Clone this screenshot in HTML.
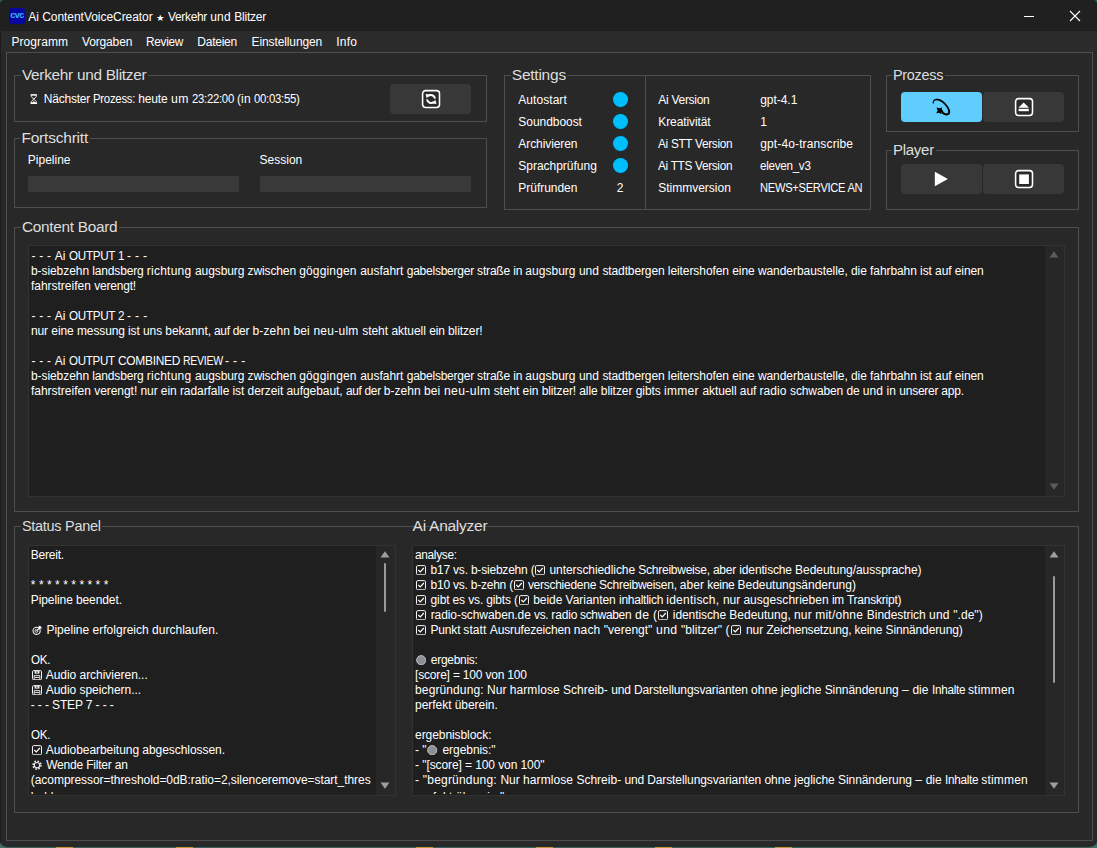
<!DOCTYPE html>
<html><head><meta charset="utf-8"><title>Ai ContentVoiceCreator</title>
<style>
html,body{margin:0;padding:0;overflow:hidden;}
body{width:1097px;height:848px;overflow:hidden;position:relative;background:#4d6f69;font-family:"Liberation Sans",sans-serif;}
#win{position:absolute;left:0;top:0;width:1097px;height:845.5px;background:#282828;border-radius:6px 6px 8px 8px;overflow:hidden;box-shadow:0 0 1.5px 0.5px #14201e;}
.t{position:absolute;white-space:nowrap;font-family:"Liberation Sans",sans-serif;}
.i{display:inline-block;vertical-align:-1.3px;margin-left:0.9px;margin-right:1.4px;}
.dk{position:absolute;top:846.5px;height:1.5px;background:#f0b040;}
</style></head><body>
<div class="dk" style="left:55.5px;width:17px"></div><div class="dk" style="left:175.5px;width:17px"></div><div class="dk" style="left:415.5px;width:17px"></div>
<div class="dk" style="left:536px;width:16.5px"></div><div class="dk" style="left:655px;width:17px"></div><div class="dk" style="left:775.2px;width:17px"></div>
<div id="win">
<div style="position:absolute;left:0px;top:0px;width:1097px;height:31px;background:#202020;"></div>
<div style="position:absolute;left:0px;top:31px;width:1097px;height:21px;background:#2b2b2b;"></div>
<div style="position:absolute;left:0px;top:31px;width:1px;height:814px;background:#1c1c1c;"></div>
<div style="position:absolute;left:9px;top:8px;width:16px;height:16px;border-radius:3px;background:#0707a0;"></div>
<div style="position:absolute;left:8.5px;top:8px;width:17px;height:16px;color:#3fb0ff;font-weight:bold;font-size:9px;line-height:14.5px;text-align:center;letter-spacing:-0.45px;">cvc</div>
<div class="t" id="title_0" style="left:28.3px;top:10px;font-size:12px;line-height:15px;color:#fff;letter-spacing:-0.0385px;white-space:pre;">Ai </div>
<div class="t" id="title_1" style="left:42.2px;top:10px;font-size:12px;line-height:15px;color:#fff;letter-spacing:-0.0467px;white-space:pre;">ContentVoiceCreator </div>
<div class="t" id="title_2" style="left:156.0px;top:10px;font-size:12px;line-height:15px;color:#fff;letter-spacing:0.3500px;white-space:pre;transform:scaleX(1.0600);transform-origin:0 0;"><span style="font-size:9px;position:relative;top:-0.5px">★</span></div>
<div class="t" id="title_3" style="left:168.2px;top:10px;font-size:12px;line-height:15px;color:#fff;letter-spacing:-0.3000px;white-space:pre;transform:scaleX(0.9928);transform-origin:0 0;">Verkehr </div>
<div class="t" id="title_4" style="left:210.2px;top:10px;font-size:12px;line-height:15px;color:#fff;letter-spacing:0.1852px;white-space:pre;">und </div>
<div class="t" id="title_5" style="left:234.3px;top:10px;font-size:12px;line-height:15px;color:#fff;letter-spacing:-0.2491px;white-space:pre;">Blitzer</div>
<div style="position:absolute;left:1024px;top:16px;width:10px;height:1px;background:#fff;"></div>
<svg style="position:absolute;left:1069px;top:10px" width="12" height="12" viewBox="0 0 12 12"><path d="M1 1 L11 11 M11 1 L1 11" stroke="#fff" stroke-width="1.1" fill="none"/></svg>
<div class="t" id="m0" style="left:11.5px;top:35px;font-size:12px;line-height:15px;color:#fff;letter-spacing:0.0605px;">Programm</div>
<div class="t" id="m1" style="left:82.0px;top:35px;font-size:12px;line-height:15px;color:#fff;letter-spacing:-0.1488px;">Vorgaben</div>
<div class="t" id="m2" style="left:146.20000000000002px;top:35px;font-size:12px;line-height:15px;color:#fff;letter-spacing:-0.3000px;transform:scaleX(0.9878);transform-origin:0 0;">Review</div>
<div class="t" id="m3" style="left:197.3px;top:35px;font-size:12px;line-height:15px;color:#fff;letter-spacing:-0.2393px;">Dateien</div>
<div class="t" id="m4" style="left:251.5px;top:35px;font-size:12px;line-height:15px;color:#fff;letter-spacing:-0.1048px;">Einstellungen</div>
<div class="t" id="m5" style="left:336.2px;top:35px;font-size:12px;line-height:15px;color:#fff;letter-spacing:0.2711px;">Info</div>
<div style="position:absolute;left:6px;top:52px;width:1087px;height:789px;box-sizing:border-box;border:1px solid #4e4e4e;"></div>
<div style="position:absolute;left:14px;top:75px;width:473px;height:47px;box-sizing:border-box;border:1px solid #4e4e4e;"></div>
<div style="position:absolute;left:21.3px;top:75px;width:126.8px;height:1px;background:#282828;"></div>
<div class="t" id="g1" style="left:22.3px;top:65px;font-size:15.5px;line-height:20px;color:#dedede;letter-spacing:-0.3000px;transform:scaleX(0.9923);transform-origin:0 0;">Verkehr und Blitzer</div>
<div style="position:absolute;left:30px;top:93.5px;line-height:0;font-size:0"><svg style="display:block" width="7.6" height="10.2" viewBox="0 0 8 11" preserveAspectRatio="none"><path d="M0.5 0.8 H7.5 M0.5 10.2 H7.5" stroke="#fff" stroke-width="1.3"/><path d="M1.4 1.2 V2.8 L4 5.5 L6.6 2.8 V1.2 Z M1.4 9.8 V8.2 L4 5.5 L6.6 8.2 V9.8 Z" fill="none" stroke="#fff" stroke-width="1"/><path d="M2.2 9.6 L4 7.6 L5.8 9.6Z" fill="#fff"/></svg></div>
<div class="t" id="np_0" style="left:43.8px;top:92px;font-size:12px;line-height:15px;color:#fff;letter-spacing:-0.2177px;white-space:pre;">Nächster </div>
<div class="t" id="np_1" style="left:93.2px;top:92px;font-size:12px;line-height:15px;color:#fff;letter-spacing:-0.3000px;white-space:pre;transform:scaleX(0.9511);transform-origin:0 0;">Prozess: </div>
<div class="t" id="np_2" style="left:138.2px;top:92px;font-size:12px;line-height:15px;color:#fff;letter-spacing:-0.1458px;white-space:pre;">heute </div>
<div class="t" id="np_3" style="left:170.7px;top:92px;font-size:12px;line-height:15px;color:#fff;letter-spacing:0.3500px;white-space:pre;transform:scaleX(1.0206);transform-origin:0 0;">um </div>
<div class="t" id="np_4" style="left:192.2px;top:92px;font-size:12px;line-height:15px;color:#fff;letter-spacing:-0.3000px;white-space:pre;transform:scaleX(0.9462);transform-origin:0 0;">23:22:00 </div>
<div class="t" id="np_5" style="left:237.0px;top:92px;font-size:12px;line-height:15px;color:#fff;letter-spacing:0.1070px;white-space:pre;">(in </div>
<div class="t" id="np_6" style="left:254.1px;top:92px;font-size:12px;line-height:15px;color:#fff;letter-spacing:-0.3000px;white-space:pre;transform:scaleX(0.9496);transform-origin:0 0;">00:03:55)</div>
<div style="position:absolute;left:390px;top:84px;width:81px;height:30px;background:#383838;border-radius:4px;"></div>
<svg style="position:absolute;left:421px;top:89px" width="20" height="20" viewBox="0 0 20 20"><rect x="1.6" y="1.6" width="16.9" height="16.9" rx="2.9" fill="#2b2b2b" stroke="#fff" stroke-width="1.55"/><path d="M7.1 7.2 A4.1 4.1 0 0 1 14.0 9.6" fill="none" stroke="#fff" stroke-width="2"/><path d="M4.6 4.9 L9.0 5.6 L5.6 9.3 Z" fill="#fff"/><path d="M12.9 12.8 A4.1 4.1 0 0 1 6.0 10.4" fill="none" stroke="#fff" stroke-width="2"/><path d="M15.4 15.1 L11.0 14.4 L14.4 10.7 Z" fill="#fff"/></svg>
<div style="position:absolute;left:14px;top:138px;width:473px;height:70px;box-sizing:border-box;border:1px solid #4e4e4e;"></div>
<div style="position:absolute;left:20.4px;top:138px;width:69.2px;height:1px;background:#282828;"></div>
<div class="t" id="g2" style="left:21.4px;top:128px;font-size:15.5px;line-height:20px;color:#dedede;letter-spacing:-0.2006px;">Fortschritt</div>
<div class="t" id="pl" style="left:27.8px;top:153px;font-size:12px;line-height:15px;color:#fff;letter-spacing:0.0000px;">Pipeline</div>
<div class="t" id="se" style="left:259.6px;top:153px;font-size:12px;line-height:15px;color:#fff;letter-spacing:0.0000px;">Session</div>
<div style="position:absolute;left:28px;top:176px;width:211px;height:16px;background:#3a3a3a;border-radius:2px;"></div>
<div style="position:absolute;left:260px;top:176px;width:211px;height:16px;background:#3a3a3a;border-radius:2px;"></div>
<div style="position:absolute;left:504px;top:75px;width:367px;height:135px;box-sizing:border-box;border:1px solid #4e4e4e;"></div>
<div style="position:absolute;left:510.8px;top:75px;width:56.6px;height:1px;background:#282828;"></div>
<div class="t" id="g3" style="left:511.8px;top:65px;font-size:15.5px;line-height:20px;color:#dedede;letter-spacing:-0.2395px;">Settings</div>
<div style="position:absolute;left:645px;top:75px;width:1px;height:135px;background:#4e4e4e;"></div>
<div class="t" id="sa0" style="left:518.3px;top:93px;font-size:12px;line-height:15px;color:#fff;letter-spacing:0.0521px;">Autostart</div>
<div class="t" id="sb0" style="left:658.3px;top:93px;font-size:12px;line-height:15px;color:#fff;letter-spacing:-0.2831px;">Ai Version</div>
<div class="t" id="sc0" style="left:760.2px;top:93px;font-size:12px;line-height:15px;color:#fff;letter-spacing:-0.0371px;">gpt-4.1</div>
<div style="position:absolute;left:613.0px;top:91.9px;width:15.2px;height:15.2px;border-radius:50%;background:#00bfff;box-shadow:0 0 0 0.7px #123540;"></div>
<div class="t" id="sa1" style="left:518.3px;top:115px;font-size:12px;line-height:15px;color:#fff;letter-spacing:-0.0462px;">Soundboost</div>
<div class="t" id="sb1" style="left:658.3px;top:115px;font-size:12px;line-height:15px;color:#fff;letter-spacing:-0.0963px;">Kreativität</div>
<div class="t" id="sc1" style="left:760.2px;top:115px;font-size:12px;line-height:15px;color:#fff;letter-spacing:0.0000px;">1</div>
<div style="position:absolute;left:613.0px;top:113.9px;width:15.2px;height:15.2px;border-radius:50%;background:#00bfff;box-shadow:0 0 0 0.7px #123540;"></div>
<div class="t" id="sa2" style="left:518.3px;top:137px;font-size:12px;line-height:15px;color:#fff;letter-spacing:-0.0847px;">Archivieren</div>
<div class="t" id="sb2" style="left:658.3px;top:137px;font-size:12px;line-height:15px;color:#fff;letter-spacing:-0.3000px;transform:scaleX(0.9826);transform-origin:0 0;">Ai STT Version</div>
<div class="t" id="sc2" style="left:760.2px;top:137px;font-size:12px;line-height:15px;color:#fff;letter-spacing:0.1342px;">gpt-4o-transcribe</div>
<div style="position:absolute;left:613.0px;top:135.9px;width:15.2px;height:15.2px;border-radius:50%;background:#00bfff;box-shadow:0 0 0 0.7px #123540;"></div>
<div class="t" id="sa3" style="left:518.3px;top:159px;font-size:12px;line-height:15px;color:#fff;letter-spacing:-0.0180px;">Sprachprüfung</div>
<div class="t" id="sb3" style="left:658.3px;top:159px;font-size:12px;line-height:15px;color:#fff;letter-spacing:-0.3000px;transform:scaleX(0.9813);transform-origin:0 0;">Ai TTS Version</div>
<div class="t" id="sc3" style="left:760.2px;top:159px;font-size:12px;line-height:15px;color:#fff;letter-spacing:-0.3000px;transform:scaleX(0.9727);transform-origin:0 0;">eleven_v3</div>
<div style="position:absolute;left:613.0px;top:157.9px;width:15.2px;height:15.2px;border-radius:50%;background:#00bfff;box-shadow:0 0 0 0.7px #123540;"></div>
<div class="t" id="sa4" style="left:518.3px;top:181px;font-size:12px;line-height:15px;color:#fff;letter-spacing:-0.0275px;">Prüfrunden</div>
<div class="t" id="sb4" style="left:658.3px;top:181px;font-size:12px;line-height:15px;color:#fff;letter-spacing:-0.0156px;">Stimmversion</div>
<div class="t" id="sc4" style="left:760.2px;top:181px;font-size:12px;line-height:15px;color:#fff;letter-spacing:-0.3000px;transform:scaleX(0.9281);transform-origin:0 0;">NEWS+SERVICE AN</div>
<div class="t" id="two" style="left:616.8px;top:181px;font-size:12px;line-height:15px;color:#fff;letter-spacing:0.0000px;">2</div>
<div style="position:absolute;left:886px;top:75px;width:193px;height:57px;box-sizing:border-box;border:1px solid #4e4e4e;"></div>
<div style="position:absolute;left:892.3px;top:75px;width:52.6px;height:1px;background:#282828;"></div>
<div class="t" id="g4" style="left:893.3px;top:65px;font-size:15.5px;line-height:20px;color:#dedede;letter-spacing:-0.3000px;transform:scaleX(0.9295);transform-origin:0 0;">Prozess</div>
<div style="position:absolute;left:901px;top:92px;width:81px;height:30px;background:#60cdff;border-radius:4px;"></div>
<div style="position:absolute;left:983px;top:92px;width:81px;height:30px;background:#383838;border-radius:4px;"></div>
<svg style="position:absolute;left:931px;top:96px" width="22" height="22" viewBox="0 0 22 22"><path d="M1.8 7.5 C0.8 3.0 6.4 0.9 11.6 4.7 C16.8 8.5 21.0 15.4 18.5 18.3 C16.6 20.4 12.8 19.4 10.4 17.0 L11.6 15.6 C13.4 17.3 15.8 18.0 16.9 16.8 C18.4 15.0 15.2 9.6 10.8 6.3 C6.2 2.9 2.1 3.7 2.9 7.4 Z" fill="#000"/><path d="M5.4 11.4 L9.0 12.3 L10.8 11.2 L11.0 13.8 L12.6 15.4 L10.6 16.2 L10.2 18.3 L8.2 16.8 L5.2 17.2 L6.7 14.6 Z" fill="#000"/></svg>
<svg style="position:absolute;left:1014px;top:97px" width="20" height="20" viewBox="0 0 20 20"><rect x="1.6" y="1.6" width="16.9" height="16.9" rx="2.9" fill="#2b2b2b" stroke="#fff" stroke-width="1.55"/><path d="M9.7 5.6 L15 10.8 H4.4 Z" fill="#fff"/><rect x="4.6" y="11.8" width="10.2" height="2.4" fill="#fff"/></svg>
<div style="position:absolute;left:886px;top:150px;width:193px;height:60px;box-sizing:border-box;border:1px solid #4e4e4e;"></div>
<div style="position:absolute;left:892.4px;top:150px;width:43.4px;height:1px;background:#282828;"></div>
<div class="t" id="g5" style="left:893.4px;top:140px;font-size:15.5px;line-height:20px;color:#dedede;letter-spacing:-0.3000px;transform:scaleX(0.9706);transform-origin:0 0;">Player</div>
<div style="position:absolute;left:901px;top:164px;width:81px;height:30px;background:#383838;border-radius:4px;"></div>
<div style="position:absolute;left:983px;top:164px;width:81px;height:30px;background:#383838;border-radius:4px;"></div>
<svg style="position:absolute;left:934px;top:171px" width="15" height="16" viewBox="0 0 15 16"><path d="M0.8 0.8 L13.9 8 L0.8 15.2 Z" fill="#fff"/></svg>
<svg style="position:absolute;left:1014px;top:169px" width="20" height="20" viewBox="0 0 20 20"><rect x="1.6" y="1.6" width="16.9" height="16.9" rx="2.9" fill="#2b2b2b" stroke="#fff" stroke-width="1.55"/><rect x="5.2" y="5.4" width="9.7" height="9.6" fill="#fff"/></svg>
<div style="position:absolute;left:14px;top:227px;width:1065px;height:285px;box-sizing:border-box;border:1px solid #4e4e4e;"></div>
<div style="position:absolute;left:21.1px;top:227px;width:97.8px;height:1px;background:#282828;"></div>
<div class="t" id="g6" style="left:22.1px;top:217px;font-size:15.5px;line-height:20px;color:#dedede;letter-spacing:-0.3000px;transform:scaleX(0.9920);transform-origin:0 0;">Content Board</div>
<div style="position:absolute;left:28px;top:245px;width:1037px;height:252px;background:#1f1f1f;box-sizing:border-box;border:1px solid #323232;"></div>
<div style="position:absolute;left:1045px;top:246px;width:19px;height:250px;background:#272727;"></div>
<svg style="position:absolute;left:1049px;top:250.5px" width="10" height="7" viewBox="0 0 10 7"><path d="M5 0.3 L9.5 6.5 H0.5 Z" fill="#5c5c5c"/></svg>
<svg style="position:absolute;left:1049px;top:483px" width="10" height="7" viewBox="0 0 10 7"><path d="M5 6.7 L9.5 0.5 H0.5 Z" fill="#5c5c5c"/></svg>
<div class="t" id="cb0_0" style="left:31.4px;top:249px;font-size:12px;line-height:15px;color:#fff;letter-spacing:0.2333px;white-space:pre;">- - - </div>
<div class="t" id="cb0_1" style="left:54.8px;top:249px;font-size:12px;line-height:15px;color:#fff;letter-spacing:0.0615px;white-space:pre;">Ai </div>
<div class="t" id="cb0_2" style="left:69.0px;top:249px;font-size:12px;line-height:15px;color:#fff;letter-spacing:-0.3000px;white-space:pre;transform:scaleX(0.9711);transform-origin:0 0;">OUTPUT </div>
<div class="t" id="cb0_3" style="left:117.9px;top:249px;font-size:12px;line-height:15px;color:#fff;letter-spacing:-0.3000px;white-space:pre;transform:scaleX(0.9665);transform-origin:0 0;">1 </div>
<div class="t" id="cb0_4" style="left:127.0px;top:249px;font-size:12px;line-height:15px;color:#fff;letter-spacing:0.3488px;white-space:pre;">- - -</div>
<div class="t" id="cb1_0" style="left:30.9px;top:264px;font-size:12px;line-height:15px;color:#fff;letter-spacing:-0.0588px;white-space:pre;">b-siebzehn </div>
<div class="t" id="cb1_1" style="left:92.3px;top:264px;font-size:12px;line-height:15px;color:#fff;letter-spacing:-0.1547px;white-space:pre;">landsberg </div>
<div class="t" id="cb1_2" style="left:146.8px;top:264px;font-size:12px;line-height:15px;color:#fff;letter-spacing:0.2410px;white-space:pre;">richtung </div>
<div class="t" id="cb1_3" style="left:195.0px;top:264px;font-size:12px;line-height:15px;color:#fff;letter-spacing:-0.0861px;white-space:pre;">augsburg </div>
<div class="t" id="cb1_4" style="left:247.6px;top:264px;font-size:12px;line-height:15px;color:#fff;letter-spacing:-0.1208px;white-space:pre;">zwischen </div>
<div class="t" id="cb1_5" style="left:299.2px;top:264px;font-size:12px;line-height:15px;color:#fff;letter-spacing:0.1609px;white-space:pre;">göggingen </div>
<div class="t" id="cb1_6" style="left:360.2px;top:264px;font-size:12px;line-height:15px;color:#fff;letter-spacing:-0.0226px;white-space:pre;">ausfahrt </div>
<div class="t" id="cb1_7" style="left:406.7px;top:264px;font-size:12px;line-height:15px;color:#fff;letter-spacing:-0.2300px;white-space:pre;">gabelsberger </div>
<div class="t" id="cb1_8" style="left:477.1px;top:264px;font-size:12px;line-height:15px;color:#fff;letter-spacing:-0.1816px;white-space:pre;">straße in </div>
<div class="t" id="cb1_9" style="left:525.3px;top:264px;font-size:12px;line-height:15px;color:#fff;letter-spacing:0.0281px;white-space:pre;">augsburg und </div>
<div class="t" id="cb1_10" style="left:602.4px;top:264px;font-size:12px;line-height:15px;color:#fff;letter-spacing:-0.1099px;white-space:pre;">stadtbergen </div>
<div class="t" id="cb1_11" style="left:667.8px;top:264px;font-size:12px;line-height:15px;color:#fff;letter-spacing:-0.0726px;white-space:pre;">leitershofen eine </div>
<div class="t" id="cb1_12" style="left:757.9px;top:264px;font-size:12px;line-height:15px;color:#fff;letter-spacing:-0.0582px;white-space:pre;">wanderbaustelle, die </div>
<div class="t" id="cb1_13" style="left:870.1px;top:264px;font-size:12px;line-height:15px;color:#fff;letter-spacing:-0.0828px;white-space:pre;">fahrbahn ist auf einen</div>
<div class="t" id="cb2_0" style="left:30.9px;top:279px;font-size:12px;line-height:15px;color:#fff;letter-spacing:-0.0058px;white-space:pre;">fahrstreifen </div>
<div class="t" id="cb2_1" style="left:94.2px;top:279px;font-size:12px;line-height:15px;color:#fff;letter-spacing:-0.1949px;white-space:pre;">verengt!</div>
<div class="t" id="cb4_0" style="left:31.4px;top:309px;font-size:12px;line-height:15px;color:#fff;letter-spacing:0.2333px;white-space:pre;">- - - </div>
<div class="t" id="cb4_1" style="left:54.8px;top:309px;font-size:12px;line-height:15px;color:#fff;letter-spacing:0.0615px;white-space:pre;">Ai </div>
<div class="t" id="cb4_2" style="left:69.0px;top:309px;font-size:12px;line-height:15px;color:#fff;letter-spacing:-0.3000px;white-space:pre;transform:scaleX(0.9711);transform-origin:0 0;">OUTPUT </div>
<div class="t" id="cb4_3" style="left:117.9px;top:309px;font-size:12px;line-height:15px;color:#fff;letter-spacing:-0.3000px;white-space:pre;transform:scaleX(0.9665);transform-origin:0 0;">2 </div>
<div class="t" id="cb4_4" style="left:127.0px;top:309px;font-size:12px;line-height:15px;color:#fff;letter-spacing:0.3500px;white-space:pre;transform:scaleX(1.0095);transform-origin:0 0;">- - -</div>
<div class="t" id="cb5_0" style="left:30.9px;top:324px;font-size:12px;line-height:15px;color:#fff;letter-spacing:-0.0670px;white-space:pre;">nur eine </div>
<div class="t" id="cb5_1" style="left:77.0px;top:324px;font-size:12px;line-height:15px;color:#fff;letter-spacing:-0.1216px;white-space:pre;">messung ist </div>
<div class="t" id="cb5_2" style="left:142.9px;top:324px;font-size:12px;line-height:15px;color:#fff;letter-spacing:-0.0510px;white-space:pre;">uns bekannt, </div>
<div class="t" id="cb5_3" style="left:214.3px;top:324px;font-size:12px;line-height:15px;color:#fff;letter-spacing:-0.3000px;white-space:pre;transform:scaleX(0.9973);transform-origin:0 0;">auf der </div>
<div class="t" id="cb5_4" style="left:252.5px;top:324px;font-size:12px;line-height:15px;color:#fff;letter-spacing:0.1386px;white-space:pre;">b-zehn bei </div>
<div class="t" id="cb5_5" style="left:313.4px;top:324px;font-size:12px;line-height:15px;color:#fff;letter-spacing:0.2641px;white-space:pre;">neu-ulm </div>
<div class="t" id="cb5_6" style="left:362.2px;top:324px;font-size:12px;line-height:15px;color:#fff;letter-spacing:-0.0268px;white-space:pre;">steht aktuell </div>
<div class="t" id="cb5_7" style="left:429.2px;top:324px;font-size:12px;line-height:15px;color:#fff;letter-spacing:-0.1169px;white-space:pre;">ein blitzer!</div>
<div class="t" id="cb7_0" style="left:31.4px;top:354px;font-size:12px;line-height:15px;color:#fff;letter-spacing:0.2333px;white-space:pre;">- - - </div>
<div class="t" id="cb7_1" style="left:54.8px;top:354px;font-size:12px;line-height:15px;color:#fff;letter-spacing:0.0615px;white-space:pre;">Ai </div>
<div class="t" id="cb7_2" style="left:69.0px;top:354px;font-size:12px;line-height:15px;color:#fff;letter-spacing:-0.3000px;white-space:pre;transform:scaleX(0.9652);transform-origin:0 0;">OUTPUT </div>
<div class="t" id="cb7_3" style="left:117.6px;top:354px;font-size:12px;line-height:15px;color:#fff;letter-spacing:-0.3000px;white-space:pre;transform:scaleX(0.9952);transform-origin:0 0;">COMBINED </div>
<div class="t" id="cb7_4" style="left:182.6px;top:354px;font-size:12px;line-height:15px;color:#fff;letter-spacing:-0.3000px;white-space:pre;transform:scaleX(0.8771);transform-origin:0 0;">REVIEW </div>
<div class="t" id="cb7_5" style="left:225.2px;top:354px;font-size:12px;line-height:15px;color:#fff;letter-spacing:0.3500px;white-space:pre;transform:scaleX(1.0095);transform-origin:0 0;">- - -</div>
<div class="t" id="cb8_0" style="left:30.9px;top:369px;font-size:12px;line-height:15px;color:#fff;letter-spacing:-0.0588px;white-space:pre;">b-siebzehn </div>
<div class="t" id="cb8_1" style="left:92.3px;top:369px;font-size:12px;line-height:15px;color:#fff;letter-spacing:-0.1547px;white-space:pre;">landsberg </div>
<div class="t" id="cb8_2" style="left:146.8px;top:369px;font-size:12px;line-height:15px;color:#fff;letter-spacing:0.2410px;white-space:pre;">richtung </div>
<div class="t" id="cb8_3" style="left:195.0px;top:369px;font-size:12px;line-height:15px;color:#fff;letter-spacing:-0.0861px;white-space:pre;">augsburg </div>
<div class="t" id="cb8_4" style="left:247.6px;top:369px;font-size:12px;line-height:15px;color:#fff;letter-spacing:-0.1208px;white-space:pre;">zwischen </div>
<div class="t" id="cb8_5" style="left:299.2px;top:369px;font-size:12px;line-height:15px;color:#fff;letter-spacing:0.1609px;white-space:pre;">göggingen </div>
<div class="t" id="cb8_6" style="left:360.2px;top:369px;font-size:12px;line-height:15px;color:#fff;letter-spacing:-0.0226px;white-space:pre;">ausfahrt </div>
<div class="t" id="cb8_7" style="left:406.7px;top:369px;font-size:12px;line-height:15px;color:#fff;letter-spacing:-0.2300px;white-space:pre;">gabelsberger </div>
<div class="t" id="cb8_8" style="left:477.1px;top:369px;font-size:12px;line-height:15px;color:#fff;letter-spacing:-0.1816px;white-space:pre;">straße in </div>
<div class="t" id="cb8_9" style="left:525.3px;top:369px;font-size:12px;line-height:15px;color:#fff;letter-spacing:0.0281px;white-space:pre;">augsburg und </div>
<div class="t" id="cb8_10" style="left:602.4px;top:369px;font-size:12px;line-height:15px;color:#fff;letter-spacing:-0.1099px;white-space:pre;">stadtbergen </div>
<div class="t" id="cb8_11" style="left:667.8px;top:369px;font-size:12px;line-height:15px;color:#fff;letter-spacing:-0.0726px;white-space:pre;">leitershofen eine </div>
<div class="t" id="cb8_12" style="left:757.9px;top:369px;font-size:12px;line-height:15px;color:#fff;letter-spacing:-0.0582px;white-space:pre;">wanderbaustelle, die </div>
<div class="t" id="cb8_13" style="left:870.1px;top:369px;font-size:12px;line-height:15px;color:#fff;letter-spacing:-0.0828px;white-space:pre;">fahrbahn ist auf einen</div>
<div class="t" id="cb9_0" style="left:30.9px;top:384px;font-size:12px;line-height:15px;color:#fff;letter-spacing:-0.0058px;white-space:pre;">fahrstreifen </div>
<div class="t" id="cb9_1" style="left:94.2px;top:384px;font-size:12px;line-height:15px;color:#fff;letter-spacing:-0.0448px;white-space:pre;">verengt! </div>
<div class="t" id="cb9_2" style="left:140.5px;top:384px;font-size:12px;line-height:15px;color:#fff;letter-spacing:-0.0789px;white-space:pre;">nur ein </div>
<div class="t" id="cb9_3" style="left:179.9px;top:384px;font-size:12px;line-height:15px;color:#fff;letter-spacing:-0.0669px;white-space:pre;">radarfalle ist </div>
<div class="t" id="cb9_4" style="left:247.6px;top:384px;font-size:12px;line-height:15px;color:#fff;letter-spacing:-0.0582px;white-space:pre;">derzeit aufgebaut, </div>
<div class="t" id="cb9_5" style="left:345.9px;top:384px;font-size:12px;line-height:15px;color:#fff;letter-spacing:-0.3000px;white-space:pre;transform:scaleX(0.9869);transform-origin:0 0;">auf der </div>
<div class="t" id="cb9_6" style="left:383.7px;top:384px;font-size:12px;line-height:15px;color:#fff;letter-spacing:0.0386px;white-space:pre;">b-zehn bei </div>
<div class="t" id="cb9_7" style="left:443.5px;top:384px;font-size:12px;line-height:15px;color:#fff;letter-spacing:0.3500px;white-space:pre;transform:scaleX(1.0144);transform-origin:0 0;">neu-ulm </div>
<div class="t" id="cb9_8" style="left:493.7px;top:384px;font-size:12px;line-height:15px;color:#fff;letter-spacing:-0.0703px;white-space:pre;">steht ein </div>
<div class="t" id="cb9_9" style="left:541.7px;top:384px;font-size:12px;line-height:15px;color:#fff;letter-spacing:-0.1208px;white-space:pre;">blitzer! </div>
<div class="t" id="cb9_10" style="left:579.3px;top:384px;font-size:12px;line-height:15px;color:#fff;letter-spacing:-0.1031px;white-space:pre;">alle </div>
<div class="t" id="cb9_11" style="left:600.8px;top:384px;font-size:12px;line-height:15px;color:#fff;letter-spacing:-0.0594px;white-space:pre;">blitzer gibts </div>
<div class="t" id="cb9_12" style="left:664.0px;top:384px;font-size:12px;line-height:15px;color:#fff;letter-spacing:0.2880px;white-space:pre;">immer </div>
<div class="t" id="cb9_13" style="left:702.4px;top:384px;font-size:12px;line-height:15px;color:#fff;letter-spacing:-0.0789px;white-space:pre;">aktuell auf </div>
<div class="t" id="cb9_14" style="left:759.5px;top:384px;font-size:12px;line-height:15px;color:#fff;letter-spacing:0.0781px;white-space:pre;">radio </div>
<div class="t" id="cb9_15" style="left:790.0px;top:384px;font-size:12px;line-height:15px;color:#fff;letter-spacing:-0.1052px;white-space:pre;">schwaben de </div>
<div class="t" id="cb9_16" style="left:862.8px;top:384px;font-size:12px;line-height:15px;color:#fff;letter-spacing:0.0670px;white-space:pre;">und in </div>
<div class="t" id="cb9_17" style="left:899.3px;top:384px;font-size:12px;line-height:15px;color:#fff;letter-spacing:-0.2539px;white-space:pre;">unserer </div>
<div class="t" id="cb9_18" style="left:941.3px;top:384px;font-size:12px;line-height:15px;color:#fff;letter-spacing:-0.1648px;white-space:pre;">app.</div>
<div style="position:absolute;left:14px;top:526px;width:1065px;height:287px;box-sizing:border-box;border:1px solid #4e4e4e;"></div>
<div style="position:absolute;left:20.9px;top:526px;width:81.1px;height:1px;background:#282828;"></div>
<div class="t" id="g7" style="left:21.9px;top:516px;font-size:15.5px;line-height:20px;color:#dedede;letter-spacing:-0.3000px;transform:scaleX(0.9323);transform-origin:0 0;">Status Panel</div>
<div class="t" id="g8" style="left:412.6px;top:516px;font-size:15.5px;line-height:20px;color:#dedede;letter-spacing:-0.2588px;">Ai Analyzer</div>
<div style="position:absolute;left:28px;top:545px;width:368px;height:251px;background:#1f1f1f;box-sizing:border-box;border:1px solid #323232;"></div>
<div style="position:absolute;left:376px;top:546px;width:19px;height:249px;background:#272727;"></div>
<svg style="position:absolute;left:380px;top:550.5px" width="10" height="7" viewBox="0 0 10 7"><path d="M5 0.3 L9.5 6.5 H0.5 Z" fill="#9e9e9e"/></svg>
<svg style="position:absolute;left:380px;top:782px" width="10" height="7" viewBox="0 0 10 7"><path d="M5 6.7 L9.5 0.5 H0.5 Z" fill="#9e9e9e"/></svg>
<div style="position:absolute;left:383.7px;top:562.7px;width:2.6px;height:49.299999999999955px;background:#9a9a9a;border-radius:1.3px;"></div>
<div style="position:absolute;left:412px;top:545px;width:653px;height:251px;background:#1f1f1f;box-sizing:border-box;border:1px solid #323232;"></div>
<div style="position:absolute;left:1045px;top:546px;width:19px;height:249px;background:#272727;"></div>
<svg style="position:absolute;left:1049px;top:550.5px" width="10" height="7" viewBox="0 0 10 7"><path d="M5 0.3 L9.5 6.5 H0.5 Z" fill="#9e9e9e"/></svg>
<svg style="position:absolute;left:1049px;top:782px" width="10" height="7" viewBox="0 0 10 7"><path d="M5 6.7 L9.5 0.5 H0.5 Z" fill="#9e9e9e"/></svg>
<div style="position:absolute;left:1052.7px;top:576px;width:2.6px;height:106.5px;background:#9a9a9a;border-radius:1.3px;"></div>
<div style="position:absolute;left:0;top:0;width:1097px;height:794px;overflow:hidden;">
<div class="t" id="sp0" style="left:30.8px;top:548px;font-size:12px;line-height:15px;color:#fff;letter-spacing:-0.2268px;">Bereit.</div>
<div class="t" id="sp2" style="left:30.8px;top:578px;font-size:12px;line-height:15px;color:#fff;letter-spacing:0.0464px;">* * * * * * * * * *</div>
<div class="t" id="sp3" style="left:30.8px;top:593px;font-size:12px;line-height:15px;color:#fff;letter-spacing:-0.0971px;">Pipeline beendet.</div>
<div class="t" id="sp5" style="left:30.8px;top:623px;font-size:12px;line-height:15px;color:#fff;letter-spacing:0.0125px;"><svg class="i" width="10" height="10.4" viewBox="0 0 10 10.4"><circle cx="4.6" cy="5.8" r="3.6" fill="none" stroke="#f0f0f0" stroke-width="1.05"/><path d="M6 5.8 A1.5 1.5 0 1 1 4.6 4.3" fill="none" stroke="#f0f0f0" stroke-width="0.9"/><path d="M4.6 5.8 L8.6 1.8" stroke="#fff" stroke-width="1.1" fill="none"/><path d="M6.6 0.6 L7.2 3.2 L9.8 3.8 L9 1.4 Z" fill="#fff"/></svg> Pipeline erfolgreich durchlaufen.</div>
<div class="t" id="sp7" style="left:30.8px;top:653px;font-size:12px;line-height:15px;color:#fff;letter-spacing:-0.3000px;transform:scaleX(0.9660);transform-origin:0 0;">OK.</div>
<div class="t" id="sp8" style="left:30.8px;top:668px;font-size:12px;line-height:15px;color:#fff;letter-spacing:-0.0358px;"><svg class="i" width="10" height="10.4" viewBox="0 0 10 10.4"><rect x="0.5" y="0.6" width="9" height="9.2" rx="1.2" fill="none" stroke="#f4f4f4" stroke-width="1"/><rect x="2.6" y="1" width="4.8" height="2.6" fill="#f0f0f0"/><rect x="4.3" y="1.5" width="1.3" height="1.3" fill="#202020"/><path d="M2.2 9.6 V5.6 H7.8 V9.6 M2.6 7.5 H7.4" fill="none" stroke="#f0f0f0" stroke-width="0.9"/></svg> Audio archivieren...</div>
<div class="t" id="sp9" style="left:30.8px;top:683px;font-size:12px;line-height:15px;color:#fff;letter-spacing:-0.0408px;"><svg class="i" width="10" height="10.4" viewBox="0 0 10 10.4"><rect x="0.5" y="0.6" width="9" height="9.2" rx="1.2" fill="none" stroke="#f4f4f4" stroke-width="1"/><rect x="2.6" y="1" width="4.8" height="2.6" fill="#f0f0f0"/><rect x="4.3" y="1.5" width="1.3" height="1.3" fill="#202020"/><path d="M2.2 9.6 V5.6 H7.8 V9.6 M2.6 7.5 H7.4" fill="none" stroke="#f0f0f0" stroke-width="0.9"/></svg> Audio speichern...</div>
<div class="t" id="sp10" style="left:30.8px;top:698px;font-size:12px;line-height:15px;color:#fff;letter-spacing:-0.1292px;">- - - STEP 7 - - -</div>
<div class="t" id="sp12" style="left:30.8px;top:728px;font-size:12px;line-height:15px;color:#fff;letter-spacing:-0.3000px;transform:scaleX(0.9660);transform-origin:0 0;">OK.</div>
<div class="t" id="sp13" style="left:30.8px;top:743px;font-size:12px;line-height:15px;color:#fff;letter-spacing:-0.0474px;"><svg class="i" width="10" height="10.4" viewBox="0 0 10 10.4"><rect x="0.5" y="0.6" width="9" height="9.2" rx="1.3" fill="none" stroke="#f4f4f4" stroke-width="1"/><path d="M2.3 5.0 L4.3 7.0 L7.8 3.0" fill="none" stroke="#fff" stroke-width="1.15"/></svg> Audiobearbeitung abgeschlossen.</div>
<div class="t" id="sp14" style="left:30.8px;top:758px;font-size:12px;line-height:15px;color:#fff;letter-spacing:-0.2006px;"><svg class="i" width="10" height="10.4" viewBox="0 0 10 10.4"><circle cx="5" cy="5.2" r="3.9" fill="none" stroke="#f0f0f0" stroke-width="1.7" stroke-dasharray="1.55 1.51"/><circle cx="5" cy="5.2" r="2.7" fill="none" stroke="#e8e8e8" stroke-width="1.2"/><circle cx="5" cy="5.2" r="0.9" fill="#202020"/></svg> Wende Filter an</div>
<div class="t" id="sp15" style="left:30.8px;top:773px;font-size:12px;line-height:15px;color:#fff;letter-spacing:-0.0507px;">(acompressor=threshold=0dB:ratio=2,silenceremove=start_thres</div>
<div class="t" id="sp16" style="left:30.8px;top:790px;font-size:12px;line-height:15px;color:#fff;letter-spacing:0.0000px;">hold</div>
<div class="t" id="an0_0" style="left:415.1px;top:548px;font-size:12px;line-height:15px;color:#fff;letter-spacing:-0.3000px;white-space:pre;transform:scaleX(0.9857);transform-origin:0 0;">analyse:</div>
<div class="t" id="an1_0" style="left:415.1px;top:563px;font-size:12px;line-height:15px;color:#fff;letter-spacing:-0.2047px;white-space:pre;"><svg class="i" width="10" height="10.4" viewBox="0 0 10 10.4"><rect x="0.5" y="0.6" width="9" height="9.2" rx="1.3" fill="none" stroke="#f4f4f4" stroke-width="1"/><path d="M2.3 5.0 L4.3 7.0 L7.8 3.0" fill="none" stroke="#fff" stroke-width="1.15"/></svg> b17 vs. b-siebzehn (<svg class="i" width="10" height="10.4" viewBox="0 0 10 10.4"><rect x="0.5" y="0.6" width="9" height="9.2" rx="1.3" fill="none" stroke="#f4f4f4" stroke-width="1"/><path d="M2.3 5.0 L4.3 7.0 L7.8 3.0" fill="none" stroke="#fff" stroke-width="1.15"/></svg> </div>
<div class="t" id="an1_1" style="left:549.5px;top:563px;font-size:12px;line-height:15px;color:#fff;letter-spacing:-0.0743px;white-space:pre;">unterschiedliche </div>
<div class="t" id="an1_2" style="left:638.3px;top:563px;font-size:12px;line-height:15px;color:#fff;letter-spacing:-0.2462px;white-space:pre;">Schreibweise, </div>
<div class="t" id="an1_3" style="left:712.9px;top:563px;font-size:12px;line-height:15px;color:#fff;letter-spacing:-0.1919px;white-space:pre;">aber </div>
<div class="t" id="an1_4" style="left:739.3px;top:563px;font-size:12px;line-height:15px;color:#fff;letter-spacing:-0.1432px;white-space:pre;">identische </div>
<div class="t" id="an1_5" style="left:795.1px;top:563px;font-size:12px;line-height:15px;color:#fff;letter-spacing:-0.0494px;white-space:pre;">Bedeutung/aussprache)</div>
<div class="t" id="an2_0" style="left:415.1px;top:578px;font-size:12px;line-height:15px;color:#fff;letter-spacing:-0.2248px;white-space:pre;"><svg class="i" width="10" height="10.4" viewBox="0 0 10 10.4"><rect x="0.5" y="0.6" width="9" height="9.2" rx="1.3" fill="none" stroke="#f4f4f4" stroke-width="1"/><path d="M2.3 5.0 L4.3 7.0 L7.8 3.0" fill="none" stroke="#fff" stroke-width="1.15"/></svg> b10 vs. b-zehn (<svg class="i" width="10" height="10.4" viewBox="0 0 10 10.4"><rect x="0.5" y="0.6" width="9" height="9.2" rx="1.3" fill="none" stroke="#f4f4f4" stroke-width="1"/><path d="M2.3 5.0 L4.3 7.0 L7.8 3.0" fill="none" stroke="#fff" stroke-width="1.15"/></svg> </div>
<div class="t" id="an2_1" style="left:527.9px;top:578px;font-size:12px;line-height:15px;color:#fff;letter-spacing:-0.2686px;white-space:pre;">verschiedene Schreibweisen, </div>
<div class="t" id="an2_2" style="left:679.8px;top:578px;font-size:12px;line-height:15px;color:#fff;letter-spacing:0.0281px;white-space:pre;">aber </div>
<div class="t" id="an2_3" style="left:707.3px;top:578px;font-size:12px;line-height:15px;color:#fff;letter-spacing:-0.3000px;white-space:pre;">keine </div>
<div class="t" id="an2_4" style="left:737.5px;top:578px;font-size:12px;line-height:15px;color:#fff;letter-spacing:-0.0192px;white-space:pre;">Bedeutungsänderung)</div>
<div class="t" id="an3_0" style="left:415.1px;top:593px;font-size:12px;line-height:15px;color:#fff;letter-spacing:-0.1383px;white-space:pre;"><svg class="i" width="10" height="10.4" viewBox="0 0 10 10.4"><rect x="0.5" y="0.6" width="9" height="9.2" rx="1.3" fill="none" stroke="#f4f4f4" stroke-width="1"/><path d="M2.3 5.0 L4.3 7.0 L7.8 3.0" fill="none" stroke="#fff" stroke-width="1.15"/></svg> gibt es vs. gibts (<svg class="i" width="10" height="10.4" viewBox="0 0 10 10.4"><rect x="0.5" y="0.6" width="9" height="9.2" rx="1.3" fill="none" stroke="#f4f4f4" stroke-width="1"/><path d="M2.3 5.0 L4.3 7.0 L7.8 3.0" fill="none" stroke="#fff" stroke-width="1.15"/></svg> </div>
<div class="t" id="an3_1" style="left:533.2px;top:593px;font-size:12px;line-height:15px;color:#fff;letter-spacing:-0.0447px;white-space:pre;">beide Varianten </div>
<div class="t" id="an3_2" style="left:619.0px;top:593px;font-size:12px;line-height:15px;color:#fff;letter-spacing:-0.2483px;white-space:pre;">inhaltlich </div>
<div class="t" id="an3_3" style="left:666.3px;top:593px;font-size:12px;line-height:15px;color:#fff;letter-spacing:0.2335px;white-space:pre;">identisch, </div>
<div class="t" id="an3_4" style="left:722.9px;top:593px;font-size:12px;line-height:15px;color:#fff;letter-spacing:-0.0469px;white-space:pre;">nur </div>
<div class="t" id="an3_5" style="left:743.4px;top:593px;font-size:12px;line-height:15px;color:#fff;letter-spacing:0.0425px;white-space:pre;">ausgeschrieben </div>
<div class="t" id="an3_6" style="left:832.1px;top:593px;font-size:12px;line-height:15px;color:#fff;letter-spacing:-0.3000px;white-space:pre;transform:scaleX(0.9801);transform-origin:0 0;">im </div>
<div class="t" id="an3_7" style="left:846.9px;top:593px;font-size:12px;line-height:15px;color:#fff;letter-spacing:-0.2188px;white-space:pre;">Transkript)</div>
<div class="t" id="an4_0" style="left:415.1px;top:608px;font-size:12px;line-height:15px;color:#fff;letter-spacing:-0.0730px;white-space:pre;"><svg class="i" width="10" height="10.4" viewBox="0 0 10 10.4"><rect x="0.5" y="0.6" width="9" height="9.2" rx="1.3" fill="none" stroke="#f4f4f4" stroke-width="1"/><path d="M2.3 5.0 L4.3 7.0 L7.8 3.0" fill="none" stroke="#fff" stroke-width="1.15"/></svg> radio-schwaben.de </div>
<div class="t" id="an4_1" style="left:534.0px;top:608px;font-size:12px;line-height:15px;color:#fff;letter-spacing:-0.3000px;white-space:pre;transform:scaleX(0.9902);transform-origin:0 0;">vs. </div>
<div class="t" id="an4_2" style="left:551.3px;top:608px;font-size:12px;line-height:15px;color:#fff;letter-spacing:-0.1552px;white-space:pre;">radio </div>
<div class="t" id="an4_3" style="left:580.4px;top:608px;font-size:12px;line-height:15px;color:#fff;letter-spacing:-0.3000px;white-space:pre;transform:scaleX(0.9931);transform-origin:0 0;">schwaben </div>
<div class="t" id="an4_4" style="left:634.7px;top:608px;font-size:12px;line-height:15px;color:#fff;letter-spacing:0.3500px;white-space:pre;transform:scaleX(1.0261);transform-origin:0 0;">de </div>
<div class="t" id="an4_5" style="left:652.9px;top:608px;font-size:12px;line-height:15px;color:#fff;letter-spacing:0.0917px;white-space:pre;">(<svg class="i" width="10" height="10.4" viewBox="0 0 10 10.4"><rect x="0.5" y="0.6" width="9" height="9.2" rx="1.3" fill="none" stroke="#f4f4f4" stroke-width="1"/><path d="M2.3 5.0 L4.3 7.0 L7.8 3.0" fill="none" stroke="#fff" stroke-width="1.15"/></svg> </div>
<div class="t" id="an4_6" style="left:672.8px;top:608px;font-size:12px;line-height:15px;color:#fff;letter-spacing:-0.0795px;white-space:pre;">identische </div>
<div class="t" id="an4_7" style="left:729.3px;top:608px;font-size:12px;line-height:15px;color:#fff;letter-spacing:0.0060px;white-space:pre;">Bedeutung, </div>
<div class="t" id="an4_8" style="left:794.1px;top:608px;font-size:12px;line-height:15px;color:#fff;letter-spacing:0.1031px;white-space:pre;">nur </div>
<div class="t" id="an4_9" style="left:815.2px;top:608px;font-size:12px;line-height:15px;color:#fff;letter-spacing:0.2490px;white-space:pre;">mit/ohne </div>
<div class="t" id="an4_10" style="left:866.8px;top:608px;font-size:12px;line-height:15px;color:#fff;letter-spacing:-0.0419px;white-space:pre;">Bindestrich </div>
<div class="t" id="an4_11" style="left:929.0px;top:608px;font-size:12px;line-height:15px;color:#fff;letter-spacing:0.2352px;white-space:pre;">und </div>
<div class="t" id="an4_12" style="left:953.3px;top:608px;font-size:12px;line-height:15px;color:#fff;letter-spacing:0.0328px;white-space:pre;">".de")</div>
<div class="t" id="an5_0" style="left:415.1px;top:623px;font-size:12px;line-height:15px;color:#fff;letter-spacing:-0.1801px;white-space:pre;"><svg class="i" width="10" height="10.4" viewBox="0 0 10 10.4"><rect x="0.5" y="0.6" width="9" height="9.2" rx="1.3" fill="none" stroke="#f4f4f4" stroke-width="1"/><path d="M2.3 5.0 L4.3 7.0 L7.8 3.0" fill="none" stroke="#fff" stroke-width="1.15"/></svg> Punkt </div>
<div class="t" id="an5_1" style="left:463.3px;top:623px;font-size:12px;line-height:15px;color:#fff;letter-spacing:0.0807px;white-space:pre;">statt </div>
<div class="t" id="an5_2" style="left:489.8px;top:623px;font-size:12px;line-height:15px;color:#fff;letter-spacing:-0.1375px;white-space:pre;">Ausrufezeichen </div>
<div class="t" id="an5_3" style="left:573.8px;top:623px;font-size:12px;line-height:15px;color:#fff;letter-spacing:0.1281px;white-space:pre;">nach </div>
<div class="t" id="an5_4" style="left:603.8px;top:623px;font-size:12px;line-height:15px;color:#fff;letter-spacing:0.0009px;white-space:pre;">"verengt" </div>
<div class="t" id="an5_5" style="left:655.7px;top:623px;font-size:12px;line-height:15px;color:#fff;letter-spacing:0.3500px;white-space:pre;transform:scaleX(1.0218);transform-origin:0 0;">und </div>
<div class="t" id="an5_6" style="left:681.0px;top:623px;font-size:12px;line-height:15px;color:#fff;letter-spacing:0.0725px;white-space:pre;">"blitzer" </div>
<div class="t" id="an5_7" style="left:725.6px;top:623px;font-size:12px;line-height:15px;color:#fff;letter-spacing:0.2583px;white-space:pre;">(<svg class="i" width="10" height="10.4" viewBox="0 0 10 10.4"><rect x="0.5" y="0.6" width="9" height="9.2" rx="1.3" fill="none" stroke="#f4f4f4" stroke-width="1"/><path d="M2.3 5.0 L4.3 7.0 L7.8 3.0" fill="none" stroke="#fff" stroke-width="1.15"/></svg> </div>
<div class="t" id="an5_8" style="left:746.0px;top:623px;font-size:12px;line-height:15px;color:#fff;letter-spacing:-0.0719px;white-space:pre;">nur </div>
<div class="t" id="an5_9" style="left:766.4px;top:623px;font-size:12px;line-height:15px;color:#fff;letter-spacing:-0.2119px;white-space:pre;">Zeichensetzung, </div>
<div class="t" id="an5_10" style="left:854.4px;top:623px;font-size:12px;line-height:15px;color:#fff;letter-spacing:-0.1552px;white-space:pre;">keine </div>
<div class="t" id="an5_11" style="left:885.5px;top:623px;font-size:12px;line-height:15px;color:#fff;letter-spacing:-0.1257px;white-space:pre;">Sinnänderung)</div>
<div class="t" id="an7_0" style="left:415.1px;top:653px;font-size:12px;line-height:15px;color:#fff;letter-spacing:-0.2977px;white-space:pre;"><svg class="i" width="10.4" height="10.4" viewBox="0 0 10.4 10.4"><circle cx="5.2" cy="5.2" r="4.6" fill="#8e8e96" stroke="#c4c4cc" stroke-width="0.9"/></svg> ergebnis:</div>
<div class="t" id="an8_0" style="left:415.1px;top:668px;font-size:12px;line-height:15px;color:#fff;letter-spacing:-0.1929px;white-space:pre;">[score] = 100 von 100</div>
<div class="t" id="an9_0" style="left:415.1px;top:683px;font-size:12px;line-height:15px;color:#fff;letter-spacing:0.1055px;white-space:pre;">begründung: </div>
<div class="t" id="an9_1" style="left:487.1px;top:683px;font-size:12px;line-height:15px;color:#fff;letter-spacing:0.0070px;white-space:pre;">Nur </div>
<div class="t" id="an9_2" style="left:509.8px;top:683px;font-size:12px;line-height:15px;color:#fff;letter-spacing:0.0681px;white-space:pre;">harmlose </div>
<div class="t" id="an9_3" style="left:563.1px;top:683px;font-size:12px;line-height:15px;color:#fff;letter-spacing:0.0076px;white-space:pre;">Schreib- </div>
<div class="t" id="an9_4" style="left:611.2px;top:683px;font-size:12px;line-height:15px;color:#fff;letter-spacing:-0.1648px;white-space:pre;">und </div>
<div class="t" id="an9_5" style="left:633.9px;top:683px;font-size:12px;line-height:15px;color:#fff;letter-spacing:-0.1003px;white-space:pre;">Darstellungsvarianten </div>
<div class="t" id="an9_6" style="left:751.1px;top:683px;font-size:12px;line-height:15px;color:#fff;letter-spacing:-0.0330px;white-space:pre;">ohne jegliche </div>
<div class="t" id="an9_7" style="left:824.7px;top:683px;font-size:12px;line-height:15px;color:#fff;letter-spacing:-0.0675px;white-space:pre;">Sinnänderung </div>
<div class="t" id="an9_8" style="left:901.9px;top:683px;font-size:12px;line-height:15px;color:#fff;letter-spacing:0.2422px;white-space:pre;">– </div>
<div class="t" id="an9_9" style="left:912.4px;top:683px;font-size:12px;line-height:15px;color:#fff;letter-spacing:0.0102px;white-space:pre;">die </div>
<div class="t" id="an9_10" style="left:931.8px;top:683px;font-size:12px;line-height:15px;color:#fff;letter-spacing:-0.3000px;white-space:pre;transform:scaleX(0.9763);transform-origin:0 0;">Inhalte </div>
<div class="t" id="an9_11" style="left:967.9px;top:683px;font-size:12px;line-height:15px;color:#fff;letter-spacing:0.2080px;white-space:pre;">stimmen</div>
<div class="t" id="an10_0" style="left:415.1px;top:698px;font-size:12px;line-height:15px;color:#fff;letter-spacing:-0.0494px;white-space:pre;">perfekt überein.</div>
<div class="t" id="an12_0" style="left:415.1px;top:728px;font-size:12px;line-height:15px;color:#fff;letter-spacing:-0.0779px;white-space:pre;">ergebnisblock:</div>
<div class="t" id="an13_0" style="left:415.1px;top:743px;font-size:12px;line-height:15px;color:#fff;letter-spacing:-0.0556px;white-space:pre;">- "<svg class="i" width="10.4" height="10.4" viewBox="0 0 10.4 10.4"><circle cx="5.2" cy="5.2" r="4.6" fill="#8e8e96" stroke="#c4c4cc" stroke-width="0.9"/></svg> ergebnis:"</div>
<div class="t" id="an14_0" style="left:415.1px;top:758px;font-size:12px;line-height:15px;color:#fff;letter-spacing:-0.0924px;white-space:pre;">- "[score] = 100 von 100"</div>
<div class="t" id="an15_0" style="left:415.1px;top:773px;font-size:12px;line-height:15px;color:#fff;letter-spacing:0.1981px;white-space:pre;">- "begründung: </div>
<div class="t" id="an15_1" style="left:500.40000000000003px;top:773px;font-size:12px;line-height:15px;color:#fff;letter-spacing:0.0070px;white-space:pre;">Nur </div>
<div class="t" id="an15_2" style="left:523.1px;top:773px;font-size:12px;line-height:15px;color:#fff;letter-spacing:0.0681px;white-space:pre;">harmlose </div>
<div class="t" id="an15_3" style="left:576.4px;top:773px;font-size:12px;line-height:15px;color:#fff;letter-spacing:0.0076px;white-space:pre;">Schreib- </div>
<div class="t" id="an15_4" style="left:624.5px;top:773px;font-size:12px;line-height:15px;color:#fff;letter-spacing:-0.1648px;white-space:pre;">und </div>
<div class="t" id="an15_5" style="left:647.1999999999999px;top:773px;font-size:12px;line-height:15px;color:#fff;letter-spacing:-0.1003px;white-space:pre;">Darstellungsvarianten </div>
<div class="t" id="an15_6" style="left:764.4px;top:773px;font-size:12px;line-height:15px;color:#fff;letter-spacing:-0.0330px;white-space:pre;">ohne jegliche </div>
<div class="t" id="an15_7" style="left:838.0px;top:773px;font-size:12px;line-height:15px;color:#fff;letter-spacing:-0.0675px;white-space:pre;">Sinnänderung </div>
<div class="t" id="an15_8" style="left:915.1999999999999px;top:773px;font-size:12px;line-height:15px;color:#fff;letter-spacing:0.2422px;white-space:pre;">– </div>
<div class="t" id="an15_9" style="left:925.6999999999999px;top:773px;font-size:12px;line-height:15px;color:#fff;letter-spacing:0.0102px;white-space:pre;">die </div>
<div class="t" id="an15_10" style="left:945.0999999999999px;top:773px;font-size:12px;line-height:15px;color:#fff;letter-spacing:-0.3000px;white-space:pre;transform:scaleX(0.9763);transform-origin:0 0;">Inhalte </div>
<div class="t" id="an15_11" style="left:981.1999999999999px;top:773px;font-size:12px;line-height:15px;color:#fff;letter-spacing:0.2080px;white-space:pre;">stimmen</div>
<div class="t" id="an16_0" style="left:415.1px;top:790px;font-size:12px;line-height:15px;color:#fff;letter-spacing:0.1026px;white-space:pre;">perfekt überein."</div>
</div>
</div>
</body></html>
